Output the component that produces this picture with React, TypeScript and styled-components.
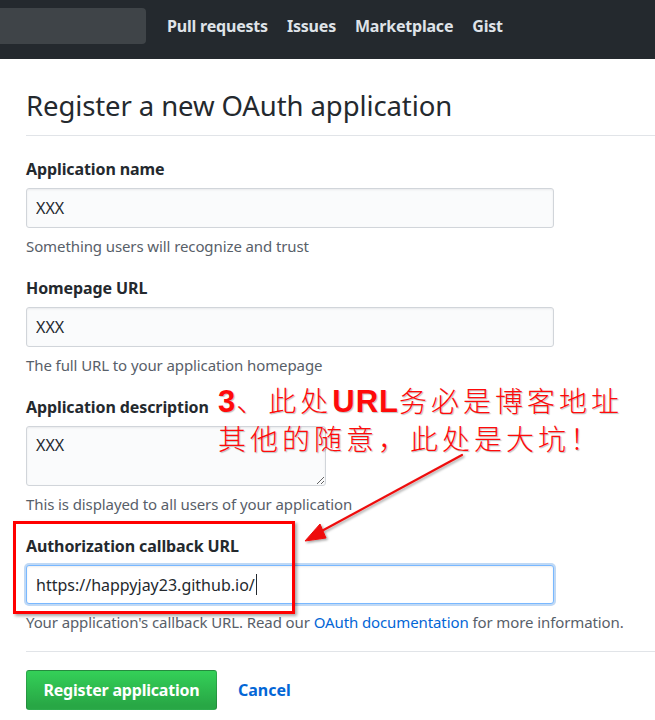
import React from "react";
import styled, { createGlobalStyle } from "styled-components";

const Global = createGlobalStyle`
  html, body { margin: 0; padding: 0; background: #fff; }
  body { font-family: "Noto Sans", "Open Sans", sans-serif; color: #24292e; overflow: hidden; }
  * { box-sizing: border-box; }
`;

const Page = styled.div`
  position: relative;
  width: 655px;
  height: 720px;
  overflow: hidden;
`;

const Header = styled.header`
  height: 59px;
  background: #24292e;
  display: flex;
  align-items: center;
  gap: 19px;
`;

const Search = styled.div`
  width: 146px;
  height: 36px;
  margin-top: -8px;
  margin-right: 2px;
  background: #3f4448;
  border-radius: 0 4px 4px 0;
`;

const NavLink = styled.a`
  font-family: "Noto Sans", sans-serif;
  font-weight: 700;
  font-size: 16px;
  color: #dfe3e8;
  text-decoration: none;
  margin-top: -8px;
  letter-spacing: -0.2px;
`;

const Main = styled.main`
  padding-left: 26px;
`;

const Subhead = styled.div`
  padding-top: 27px;
  padding-bottom: 9px;
  border-bottom: 1px solid #e1e4e8;
`;

const Title = styled.h2`
  margin: 0;
  font-weight: 400;
  font-size: 27.5px;
  line-height: 40px;
  color: #24292e;
  letter-spacing: -0.1px;
`;

const Form = styled.form`
  display: flex;
  flex-direction: column;
  padding-top: 21px;
`;

const Group = styled.section`
  display: flex;
  flex-direction: column;
  margin-bottom: 20px;
`;

const Label = styled.label`
  font-weight: 700;
  font-size: 16px;
  line-height: 24px;
  color: #24292e;
  margin-bottom: 7px;
  letter-spacing: -0.1px;
`;

const fieldBase = `
  width: 528px;
  height: 40px;
  padding: 0 9px;
  font-family: "Noto Sans", sans-serif;
  font-size: 16px;
  color: #24292e;
  background: #fafbfc;
  border: 1px solid #d1d5da;
  border-radius: 3px;
  box-shadow: inset 0 1px 2px rgba(27, 31, 35, 0.075);
  outline: none;
`;

const Input = styled.input`
  ${fieldBase}
`;

const TextArea = styled.textarea`
  ${fieldBase}
  display: block;
  width: 300px;
  height: 60px;
  padding: 7px 9px;
  line-height: 22px;
  resize: vertical;
`;

const FocusedField = styled.div<{ $w: number }>`
  ${fieldBase}
  width: ${(p) => p.$w}px;
  height: 39px;
  display: flex;
  align-items: center;
  background: #fff;
  border-color: #79b8ff;
  box-shadow: 0 0 0 2px rgba(3, 102, 214, 0.25), inset 0 1px 2px rgba(27, 31, 35, 0.075);
`;

const Caret = styled.span`
  display: inline-block;
  width: 1px;
  height: 21px;
  margin-left: 1px;
  background: #24292e;
`;

const Note = styled.p`
  margin: 8px 0 0;
  font-size: 15px;
  line-height: 20px;
  color: #586069;
  letter-spacing: -0.1px;
  white-space: nowrap;
`;

const Link = styled.a`
  color: #0366d6;
  text-decoration: none;
`;

const Actions = styled.div`
  margin-top: -1px;
  border-top: 1px solid #e1e4e8;
  padding-top: 18px;
  display: flex;
  align-items: center;
  gap: 21px;
`;

const PrimaryButton = styled.button`
  width: 191px;
  height: 40px;
  border: 1px solid rgba(27, 31, 35, 0.2);
  border-radius: 3px;
  background: linear-gradient(-180deg, #34d058 0%, #28a745 90%);
  color: #fff;
  font-family: "Noto Sans", sans-serif;
  font-weight: 700;
  font-size: 16px;
  letter-spacing: -0.2px;
`;

const CancelLink = styled.a`
  color: #0366d6;
  font-weight: 700;
  font-size: 16px;
  text-decoration: none;
`;

/* Annotation overlay */
const Callout = styled.div`
  position: absolute;
  left: 218px;
  top: 382px;
  font-family: "Noto Sans CJK SC", "Noto Sans", sans-serif;
  font-weight: 300;
  font-size: 28px;
  line-height: 36px;
  letter-spacing: 4px;
  color: #ff0a0a;
  text-shadow: 1px 1px 1px rgba(0, 0, 0, 0.25);
  white-space: nowrap;
`;

const Latin = styled.span`
  font-family: "Liberation Sans", Arial, sans-serif;
  font-weight: 700;
  font-size: 31px;
  letter-spacing: 1px;
`;

const RedBox = styled.div`
  position: absolute;
  left: 13px;
  top: 521px;
  width: 282px;
  height: 93px;
  border: 3px solid #ff0000;
  box-shadow: 2px 2px 3px rgba(0, 0, 0, 0.35);
`;

const ArrowSvg = styled.svg`
  position: absolute;
  left: 0;
  top: 0;
  pointer-events: none;
`;

export default function App() {
  return (
    <Page>
      <Global />
      <Header>
        <Search />
        <NavLink href="#">Pull requests</NavLink>
        <NavLink href="#">Issues</NavLink>
        <NavLink href="#">Marketplace</NavLink>
        <NavLink href="#">Gist</NavLink>
      </Header>
      <Main>
        <Subhead>
          <Title>Register a new OAuth application</Title>
        </Subhead>
        <Form>
          <Group>
            <Label>Application name</Label>
            <Input readOnly value="XXX" />
            <Note>Something users will recognize and trust</Note>
          </Group>
          <Group>
            <Label>Homepage URL</Label>
            <Input readOnly value="XXX" />
            <Note>The full URL to your application homepage</Note>
          </Group>
          <Group>
            <Label>Application description</Label>
            <TextArea readOnly value="XXX" />
            <Note>This is displayed to all users of your application</Note>
          </Group>
          <Group>
            <Label>Authorization callback URL</Label>
            <FocusedField $w={528}>
              https://happyjay23.github.io/
              <Caret />
            </FocusedField>
            <Note>
              Your application's callback URL. Read our <Link href="#">OAuth documentation</Link> for more information.
            </Note>
          </Group>
          <Actions>
            <PrimaryButton type="button">Register application</PrimaryButton>
            <CancelLink href="#">Cancel</CancelLink>
          </Actions>
        </Form>
      </Main>

      <Callout>
        <div>
          <Latin>3</Latin>、此处<Latin>URL</Latin>务必是博客地址
        </div>
        <div>其他的随意，此处是大坑！</div>
      </Callout>
      <RedBox />
      <ArrowSvg width="655" height="720" viewBox="0 0 655 720">
        <defs>
          <filter id="sh" x="-10%" y="-10%" width="130%" height="130%">
            <feDropShadow dx="1.5" dy="1.5" stdDeviation="1" floodColor="#000" floodOpacity="0.35" />
          </filter>
        </defs>
        <g filter="url(#sh)" fill="#ee1111" stroke="#ee1111">
          <line x1="462" y1="455" x2="318" y2="533" strokeWidth="2.2" strokeLinecap="round" />
          <polygon points="305,541 320,524 326,538" strokeWidth="1" strokeLinejoin="round" />
        </g>
      </ArrowSvg>
    </Page>
  );
}
